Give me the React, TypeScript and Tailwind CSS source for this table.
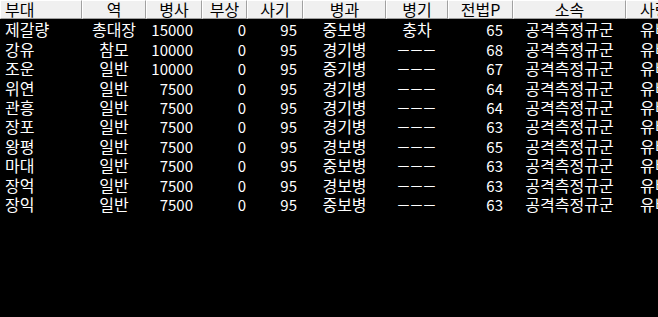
import React from 'react'

type Col = { title: string; width: string; align: 'left' | 'center' | 'right'; pad: string; num?: boolean }

const columns: Col[] = [
  { title: '부대', width: 'w-[82px]', align: 'left', pad: 'pl-[5px]' },
  { title: '역', width: 'w-[64px]', align: 'center', pad: '' },
  { title: '병사', width: 'w-[56px]', align: 'right', pad: 'pr-[9px]', num: true },
  { title: '부상', width: 'w-[45px]', align: 'right', pad: 'pr-[1px]', num: true },
  { title: '사기', width: 'w-[56px]', align: 'right', pad: 'pr-[6px]', num: true },
  { title: '병과', width: 'w-[83px]', align: 'center', pad: '' },
  { title: '병기', width: 'w-[62px]', align: 'center', pad: '' },
  { title: '전법P', width: 'w-[65px]', align: 'right', pad: 'pr-[10px]', num: true },
  { title: '소속', width: 'w-[113px]', align: 'center', pad: '' },
  { title: '사령관', width: 'w-[75px]', align: 'left', pad: 'pl-[14px]' },
]

const DASH = 'ㅡㅡㅡ'

const rows: string[][] = [
  ['제갈량', '총대장', '15000', '0', '95', '중보병', '충차', '65', '공격측정규군', '유비'],
  ['강유', '참모', '10000', '0', '95', '경기병', DASH, '68', '공격측정규군', '유비'],
  ['조운', '일반', '10000', '0', '95', '중기병', DASH, '67', '공격측정규군', '유비'],
  ['위연', '일반', '7500', '0', '95', '경기병', DASH, '64', '공격측정규군', '유비'],
  ['관흥', '일반', '7500', '0', '95', '경기병', DASH, '64', '공격측정규군', '유비'],
  ['장포', '일반', '7500', '0', '95', '경기병', DASH, '63', '공격측정규군', '유비'],
  ['왕평', '일반', '7500', '0', '95', '경보병', DASH, '65', '공격측정규군', '유비'],
  ['마대', '일반', '7500', '0', '95', '중보병', DASH, '63', '공격측정규군', '유비'],
  ['장억', '일반', '7500', '0', '95', '경보병', DASH, '63', '공격측정규군', '유비'],
  ['장익', '일반', '7500', '0', '95', '중보병', DASH, '63', '공격측정규군', '유비'],
]

const alignClass = (a: Col['align']) =>
  a === 'left' ? 'justify-start' : a === 'right' ? 'justify-end' : 'justify-center'

export default function App() {
  return (
    <div
      className="w-[658px] h-[317px] bg-black overflow-hidden text-[16px] leading-[19px]"
      style={{ fontFamily: '"Noto Sans CJK KR", "Noto Sans", sans-serif' }}
    >
      <div className="flex h-[19px] whitespace-nowrap">
        {columns.map((c, i) => (
          <div
            key={i}
            className={`${c.width} shrink-0 h-full flex items-center leading-[17px] bg-[#f0f0f0] text-black border-t border-l border-t-white border-l-white border-r border-b border-r-[#a0a0a0] border-b-[#a0a0a0] overflow-hidden ${
              i === 0 ? 'justify-start pl-[4px]' : i === 9 ? 'justify-start pl-[13px]' : 'justify-center'
            }`}
          >
            {c.title}
          </div>
        ))}
      </div>
      <div className="pt-[1px]">
        {rows.map((r, ri) => (
          <div key={ri} className="flex h-[19.45px] text-white whitespace-nowrap">
            {r.map((cell, ci) => {
              const c = columns[ci]
              return (
                <div
                  key={ci}
                  className={`${c.width} shrink-0 flex items-center overflow-hidden ${alignClass(c.align)} ${c.pad} ${
                    c.num ? 'text-[15px]' : ''
                  } ${cell === DASH ? 'text-[13px] tracking-[1px]' : ''}`}
                >
                  {cell}
                </div>
              )
            })}
          </div>
        ))}
      </div>
    </div>
  )
}
